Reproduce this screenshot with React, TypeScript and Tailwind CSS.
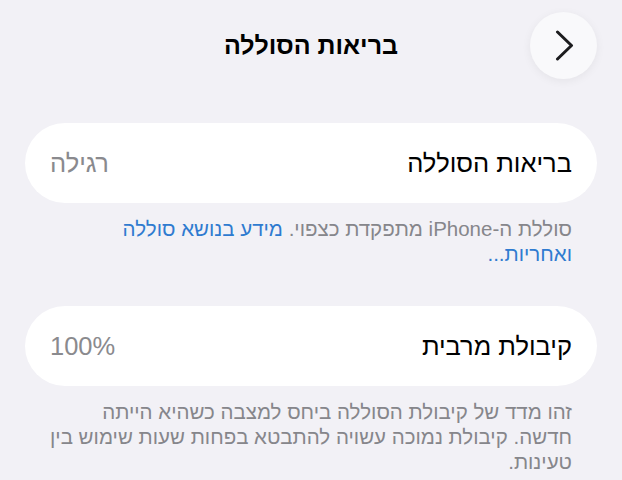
const font = { fontFamily: '"Liberation Sans", "DejaVu Sans", sans-serif' };

function Row({ label, value }: { label: string; value: string }) {
  return (
    <div className="mx-[25px] flex h-20 items-center justify-between rounded-full bg-white px-[25px]">
      <span className="text-[25.5px] text-black">{label}</span>
      <span className="text-[25.5px] text-[#8a8a8e]">{value}</span>
    </div>
  );
}

export default function App() {
  return (
    <div dir="rtl" style={font} className="min-h-[480px] w-[622px] overflow-hidden bg-[#f2f1f6]">
      {/* nav bar: back chevron on the right, centred title */}
      <div className="relative flex h-[92px] items-center justify-center pb-[1px]">
        <button
          type="button"
          className="absolute right-[25px] top-[12px] flex size-[67px] items-center justify-center rounded-full bg-[#f9f9fb] shadow-[0_2px_10px_rgba(0,0,0,0.06)]"
        >
          <svg width="20" height="31" viewBox="0 0 20 31" fill="none" className="ml-[2px]">
            <path
              d="M2.5 2 L16.5 15.5 L2.5 29"
              stroke="#1c1c1e"
              strokeWidth="3"
              strokeLinecap="round"
              strokeLinejoin="round"
            />
          </svg>
        </button>
        <h1 className="text-[25px] font-semibold text-black">בריאות הסוללה</h1>
      </div>

      <div className="pt-[31px]">
        <Row label="בריאות הסוללה" value="רגילה" />
        <p className="px-[50px] pt-[13px] text-[20.5px] leading-[25px] text-[#86868b]">
          סוללת ה-iPhone מתפקדת כצפוי.{' '}
          <span className="text-[#2f7bd0]">מידע בנושא סוללה ואחריות...</span>
        </p>
      </div>

      <div className="pt-[40px]">
        <Row label="קיבולת מרבית" value="100%" />
        <p className="px-[50px] pt-[13px] text-[20.5px] leading-[25px] text-[#86868b]">
          זהו מדד של קיבולת הסוללה ביחס למצבה כשהיא הייתה חדשה. קיבולת נמוכה עשויה להתבטא בפחות שעות
          שימוש בין טעינות.
        </p>
      </div>
    </div>
  );
}
